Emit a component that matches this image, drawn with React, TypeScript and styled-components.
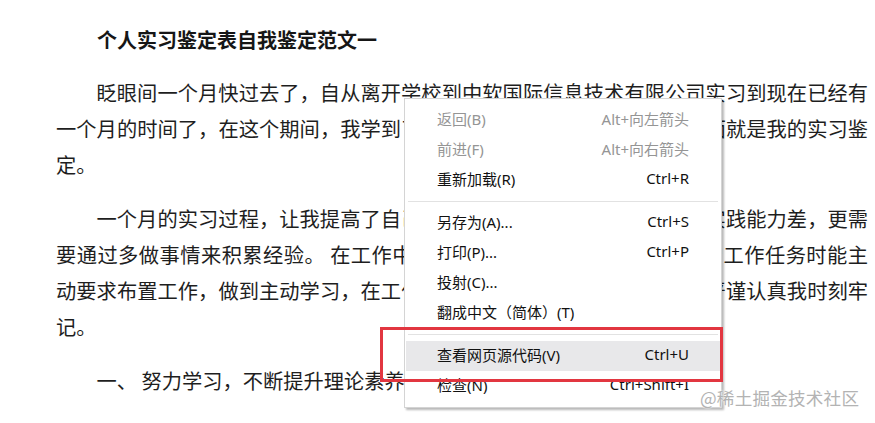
import React from "react";
import styled, { createGlobalStyle } from "styled-components";

const Global = createGlobalStyle`
  html, body { margin: 0; padding: 0; background: #fff; }
  body { width: 875px; height: 423px; overflow: hidden; }
`;

const Page = styled.div`
  position: relative;
  width: 875px;
  height: 423px;
  overflow: hidden;
  background: #fff;
`;

const Article = styled.article`
  width: 812px;
  padding: 22px 0 0 56px;
  font-family: "Noto Sans CJK SC", "Noto Sans", sans-serif;
  color: #1e1e1e;
`;

const Title = styled.h2`
  margin: 0 0 17px;
  font-size: 20px;
  line-height: 36px;
  font-weight: 700;
  text-indent: 41px;
  color: #161616;
`;

const Para = styled.p`
  margin: 0 0 18px;
  font-size: 20.25px;
  line-height: 36px;
  text-indent: 2em;
  text-align: justify;
  color: #1e1e1e;
`;

const Menu = styled.div`
  position: absolute;
  left: 404px;
  top: 98px;
  width: 318px;
  box-sizing: border-box;
  padding: 6px 0;
  background: #fff;
  border: 1px solid #d4d4d4;
  box-shadow: 2px 2px 2px rgba(0, 0, 0, 0.28);
  font-family: "Noto Sans", "Noto Sans CJK SC", sans-serif;
  font-size: 15px;
`;

const Item = styled.div<{ $disabled?: boolean; $active?: boolean }>`
  display: flex;
  align-items: center;
  justify-content: space-between;
  box-sizing: border-box;
  height: 30px;
  padding: 0 31px 4px;
  margin: 0 1px;
  color: ${(p) => (p.$disabled ? "#959595" : "#111")};
  background: ${(p) => (p.$active ? "#e8e8ea" : "transparent")};
`;

const Shortcut = styled.span`
  white-space: nowrap;
`;

const Separator = styled.div`
  height: 1px;
  margin: 6px 3px;
  background: #e2e2e2;
`;

const Highlight = styled.div`
  position: absolute;
  left: 380px;
  top: 327px;
  width: 343px;
  height: 55px;
  box-sizing: border-box;
  border: 3px solid #e23640;
  pointer-events: none;
`;

const Watermark = styled.div`
  position: absolute;
  left: 700px;
  top: 386px;
  font-family: "Noto Sans CJK SC", "Noto Sans", sans-serif;
  font-size: 17.6px;
  line-height: 24px;
  color: #b3b3b3;
  text-shadow: 0 0 1px #fff, 0 0 2px #fff;
  letter-spacing: 0.2px;
`;

type MenuEntry =
  | { kind: "item"; label: string; shortcut?: string; disabled?: boolean; active?: boolean }
  | { kind: "sep" };

const entries: MenuEntry[] = [
  { kind: "item", label: "返回(B)", shortcut: "Alt+向左箭头", disabled: true },
  { kind: "item", label: "前进(F)", shortcut: "Alt+向右箭头", disabled: true },
  { kind: "item", label: "重新加载(R)", shortcut: "Ctrl+R" },
  { kind: "sep" },
  { kind: "item", label: "另存为(A)...", shortcut: "Ctrl+S" },
  { kind: "item", label: "打印(P)...", shortcut: "Ctrl+P" },
  { kind: "item", label: "投射(C)..." },
  { kind: "item", label: "翻成中文（简体）(T)" },
  { kind: "sep" },
  { kind: "item", label: "查看网页源代码(V)", shortcut: "Ctrl+U", active: true },
  { kind: "item", label: "检查(N)", shortcut: "Ctrl+Shift+I" },
];

const paragraphs = [
  "眨眼间一个月快过去了，自从离开学校到中软国际信息技术有限公司实习到现在已经有一个月的时间了，在这个期间，我学到了很多在学校里学不到的东西，下面就是我的实习鉴定。",
  "一个月的实习过程，让我提高了自己的各方面的能力，但也发现自己实践能力差，更需要通过多做事情来积累经验。 在工作中，我积极主动，在完成上级交代的工作任务时能主动要求布置工作，做到主动学习，在工作中遇到问题时虚心请教，对工作严谨认真我时刻牢记。",
  "一、 努力学习，不断提升理论素养。",
  "在信息爆炸的时代，知识更新的速度越来越快，每时每刻都有新的知识产生。",
];

export default function App() {
  return (
    <Page>
      <Global />
      <Article>
        <Title>个人实习鉴定表自我鉴定范文一</Title>
        {paragraphs.map((t, i) => (
          <Para key={i}>{t}</Para>
        ))}
      </Article>
      <Menu>
        {entries.map((e, i) =>
          e.kind === "sep" ? (
            <Separator key={i} />
          ) : (
            <Item key={i} $disabled={e.disabled} $active={e.active}>
              <span>{e.label}</span>
              {e.shortcut && <Shortcut>{e.shortcut}</Shortcut>}
            </Item>
          )
        )}
      </Menu>
      <Highlight />
      <Watermark>@稀土掘金技术社区</Watermark>
    </Page>
  );
}
